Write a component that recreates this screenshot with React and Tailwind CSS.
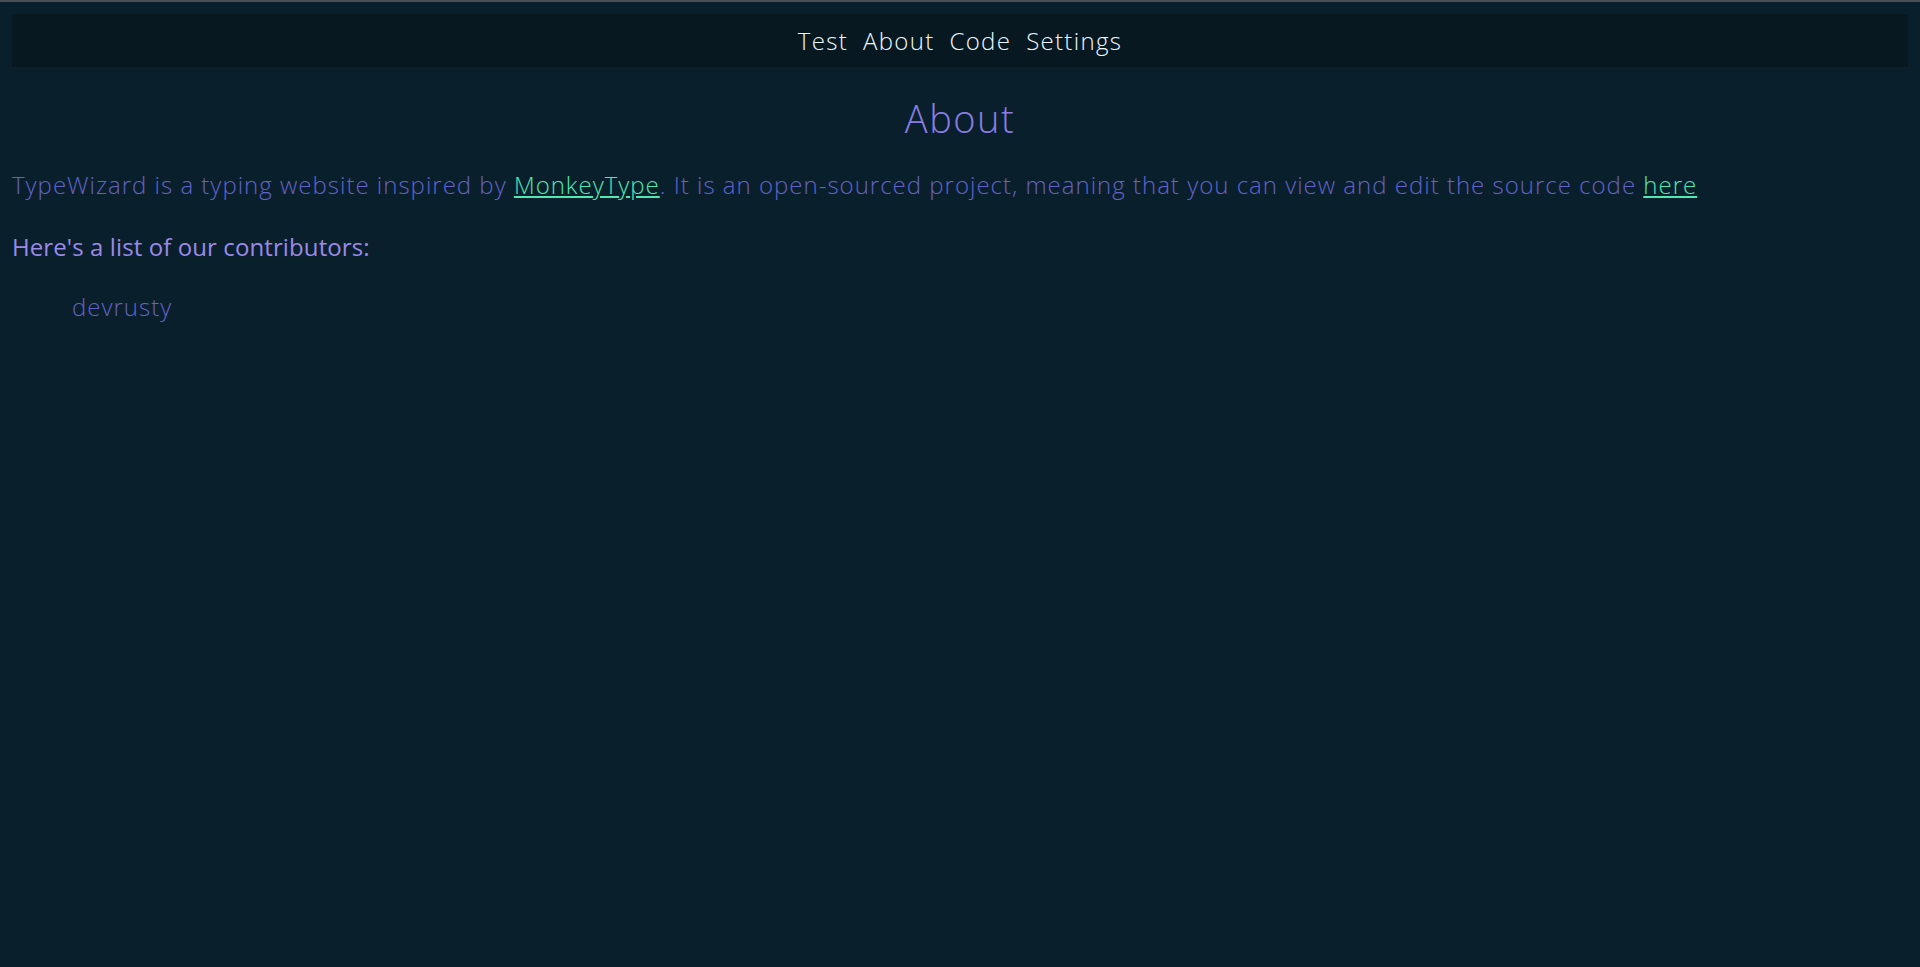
import React from 'react';

const font = { fontFamily: '"Open Sans", "Liberation Sans", sans-serif' };

const App = () => {
  return (
    <div className="min-h-[967px] bg-[#0a1f2c] border-t-2 border-[#4b4f52] px-3 pt-3" style={font}>
      <nav className="bg-[#071821] h-[53px] flex items-center justify-center gap-[15px] text-[24px] font-light tracking-[1.3px] text-[#eef8ff]">
        <a href="#">Test</a>
        <a href="#">About</a>
        <a href="#">Code</a>
        <a href="#">Settings</a>
      </nav>

      <h1 className="text-center text-[38px] font-light tracking-[1.5px] text-[#8a7de2] mt-[23px]">About</h1>

      <p className="mt-5 text-[24px] font-light tracking-[1px] text-[#6262c8]">
        TypeWizard is a typing website inspired by{' '}
        <a href="#" className="underline text-[#4fe8b2]">MonkeyType</a>
        . It is an open-sourced project, meaning that you can view and edit the source code{' '}
        <a href="#" className="underline text-[#4fe8b2]">here</a>
      </p>

      <p className="mt-[26px] text-[24px] tracking-[0.1px] text-[#9a8ae8]">Here's a list of our contributors:</p>

      <ul className="mt-6 pl-[60px] text-[24px] font-light tracking-[1px] text-[#6262c8]">
        <li>devrusty</li>
      </ul>
    </div>
  );
};

export default App;
